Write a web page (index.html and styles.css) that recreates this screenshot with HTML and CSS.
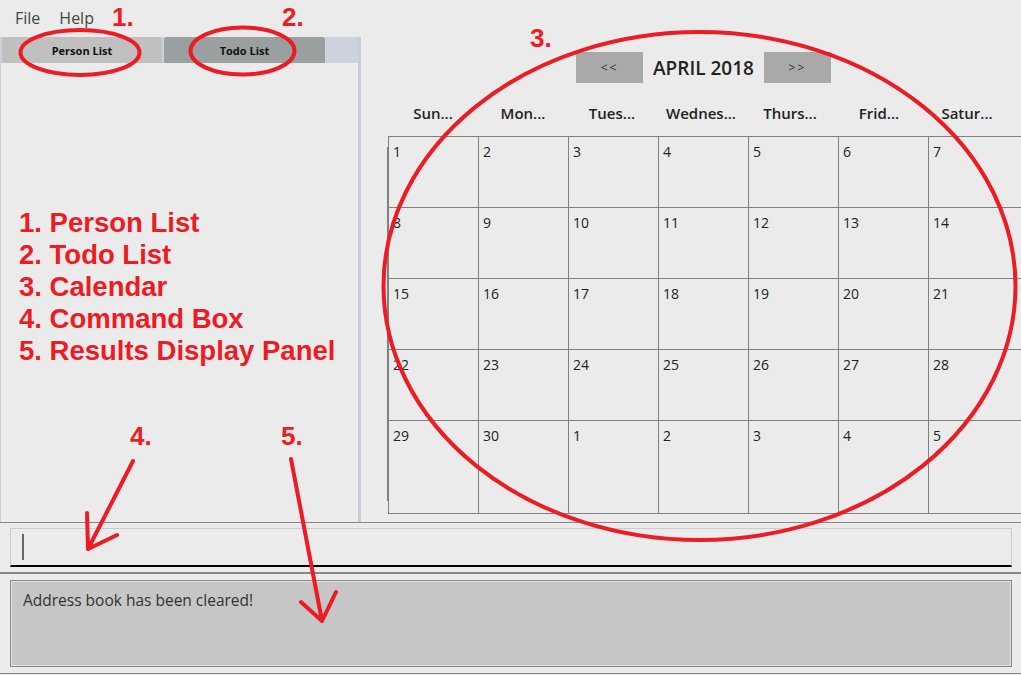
FILE: index.html
```html
<!DOCTYPE html>
<html>
<head>
<meta charset="utf-8">
<title>Address Book</title>
<link rel="stylesheet" href="styles.css">
</head>
<body>
<div class="app">
  <div class="menubar">
    <span class="menu-item">File</span>
    <span class="menu-item">Help</span>
  </div>
  <div class="main">
    <div class="left-panel">
      <div class="tabs">
        <div class="tab tab-person">Person List</div>
        <div class="tab tab-todo">Todo List</div>
      </div>
      <div class="panel-content">
        <div class="legend">
          <div>1. Person List</div>
          <div>2. Todo List</div>
          <div>3. Calendar</div>
          <div>4. Command Box</div>
          <div>5. Results Display Panel</div>
        </div>
      </div>
    </div>
    <div class="calendar">
      <div class="cal-inner">
        <div class="cal-header">
          <div class="nav-btn">&lt;&lt;</div>
          <div class="month-title">APRIL 2018</div>
          <div class="nav-btn">&gt;&gt;</div>
        </div>
        <div class="weekdays">
          <div>Sun...</div><div>Mon...</div><div>Tues...</div><div>Wednes...</div><div>Thurs...</div><div>Frid...</div><div>Satur...</div>
        </div>
        <div class="grid">
          <div class="cell">1</div><div class="cell">2</div><div class="cell">3</div><div class="cell">4</div><div class="cell">5</div><div class="cell">6</div><div class="cell">7</div>
          <div class="cell">8</div><div class="cell">9</div><div class="cell">10</div><div class="cell">11</div><div class="cell">12</div><div class="cell">13</div><div class="cell">14</div>
          <div class="cell">15</div><div class="cell">16</div><div class="cell">17</div><div class="cell">18</div><div class="cell">19</div><div class="cell">20</div><div class="cell">21</div>
          <div class="cell">22</div><div class="cell">23</div><div class="cell">24</div><div class="cell">25</div><div class="cell">26</div><div class="cell">27</div><div class="cell">28</div>
          <div class="cell">29</div><div class="cell">30</div><div class="cell">1</div><div class="cell">2</div><div class="cell">3</div><div class="cell">4</div><div class="cell">5</div>
        </div>
      </div>
    </div>
  </div>
  <div class="sep"></div>
  <div class="command-area">
    <div class="command-box"><span class="caret"></span></div>
  </div>
  <div class="sep-thick"></div>
  <div class="results-area">
    <div class="results-box">Address book has been cleared!</div>
  </div>
  <div class="sep bottom"></div>

  <div class="annotations">
    <span class="num n1">1.</span>
    <span class="num n2">2.</span>
    <span class="num n3">3.</span>
    <span class="num n4">4.</span>
    <span class="num n5">5.</span>
    <svg class="marks" width="1021" height="675" viewBox="0 0 1021 675">
      <g fill="none" stroke="#ed1c24" stroke-width="4" stroke-linecap="round" stroke-linejoin="round">
        <ellipse cx="80" cy="52.5" rx="59.5" ry="22.5"/>
        <ellipse cx="242.5" cy="51" rx="52" ry="23.5"/>
        <ellipse cx="699.5" cy="286" rx="316" ry="254"/>
        <path d="M133 461 L88 549 M87 513 L88 549 L117 535"/>
        <path d="M291 459 L322 621 M301 602 L322 621 L336 592"/>
      </g>
    </svg>
  </div>
</div>
</body>
</html>
```

FILE: styles.css
```css
* { box-sizing: border-box; }

html, body {
  margin: 0;
  padding: 0;
  width: 1021px;
  height: 675px;
  overflow: hidden;
  background: #ebebeb;
}

.app {
  position: relative;
  width: 1021px;
  height: 675px;
  font-family: "Open Sans", "Noto Sans", sans-serif;
  color: #222;
}

/* menu bar */
.menubar {
  height: 37px;
  display: flex;
  align-items: center;
  padding: 0 0 2px 15px;
  gap: 19px;
  font-size: 16px;
  color: #444;
}

/* main area */
.main {
  display: flex;
  height: 485px;
}

.left-panel {
  width: 361px;
  flex: none;
  display: flex;
  flex-direction: column;
  border-left: 1px solid #c9cfdb;
  border-right: 3px solid #c9ccd8;
}

.tabs {
  height: 26px;
  background: #ccd3dc;
  display: flex;
  gap: 2px;
  padding-left: 1px;
}

.tab {
  height: 26px;
  display: flex;
  align-items: center;
  justify-content: center;
  font-size: 11px;
  font-weight: 700;
  color: #111;
  border-radius: 3px 3px 0 0;
}

.tab-person {
  width: 160px;
  background: #c0c0c0;
}

.tab-todo {
  width: 161px;
  background: #99a09f;
}

.panel-content {
  flex: 1;
  background: #ebebeb;
  padding: 144px 0 0 18px;
}

.legend {
  font-family: "Liberation Sans", Arial, sans-serif;
  font-weight: 700;
  font-size: 27.5px;
  line-height: 32px;
  color: #ed1c24;
}

/* calendar */
.calendar {
  flex: 1;
  overflow: hidden;
}

.cal-inner {
  margin-left: 27px;
  width: 631px;
  padding-top: 15px;
}

.cal-header {
  display: flex;
  justify-content: center;
  align-items: center;
  gap: 10px;
  height: 31px;
}

.nav-btn {
  width: 67px;
  height: 31px;
  background: #a9a9a9;
  display: flex;
  align-items: center;
  justify-content: center;
  font-size: 12px;
  letter-spacing: 2px;
  color: #333;
}

.month-title {
  font-size: 19px;
  font-weight: 600;
  color: #222;
}

.weekdays {
  margin-top: 17px;
  height: 26px;
  display: grid;
  grid-template-columns: 90px 90px 88px 90px 88px 90px 86px;
  padding-left: 0;
  align-items: center;
  font-size: 15px;
  font-weight: 600;
  color: #222;
}

.weekdays div {
  text-align: center;
}

.grid {
  position: relative;
  margin-top: 10px;
  display: grid;
  grid-template-columns: repeat(6, 90px) 110px;
  grid-template-rows: 71px 71px 71px 71px 93px;
  border-top: 1px solid #808080;
  border-left: 1px solid #808080;
  width: 651px;
}

.grid::before {
  content: "";
  position: absolute;
  left: -2px;
  top: 10px;
  width: 1px;
  height: 354px;
  background: #808080;
}

.cell {
  border-right: 1px solid #808080;
  border-bottom: 1px solid #808080;
  padding: 5px 0 0 4px;
  font-size: 14px;
  line-height: 19px;
  color: #222;
}

/* bottom area */
.sep {
  height: 1px;
  background: #888;
}

.command-area {
  padding: 5px 9px 5px 10px;
}

.command-box {
  height: 39px;
  border: 1px solid #cccccc;
  border-bottom: 2px solid #000;
  display: flex;
  align-items: center;
  padding-left: 11px;
}

.caret {
  display: block;
  width: 2px;
  height: 26px;
  background: #666;
}

.sep-thick {
  height: 2px;
  background: #888;
}

.results-area {
  padding: 6px 9px 6px 10px;
}

.results-box {
  height: 87px;
  border: 1px solid #888;
  box-shadow: inset 0 0 0 1px #e2e2e2;
  background: #c6c6c6;
  padding: 8px 12px;
  font-size: 15.5px;
  color: #333;
  line-height: 22px;
}

/* annotation overlay */
.annotations {
  position: absolute;
  inset: 0;
  pointer-events: none;
}

.marks {
  position: absolute;
  left: 0;
  top: 0;
}

.num {
  position: absolute;
  font-family: "Liberation Sans", Arial, sans-serif;
  font-weight: 700;
  font-size: 26px;
  line-height: 26px;
  color: #ed1c24;
}

.n1 { left: 112px; top: 4px; }
.n2 { left: 282px; top: 4px; }
.n3 { left: 530px; top: 25px; }
.n4 { left: 130px; top: 423px; }
.n5 { left: 281px; top: 423px; }
```
